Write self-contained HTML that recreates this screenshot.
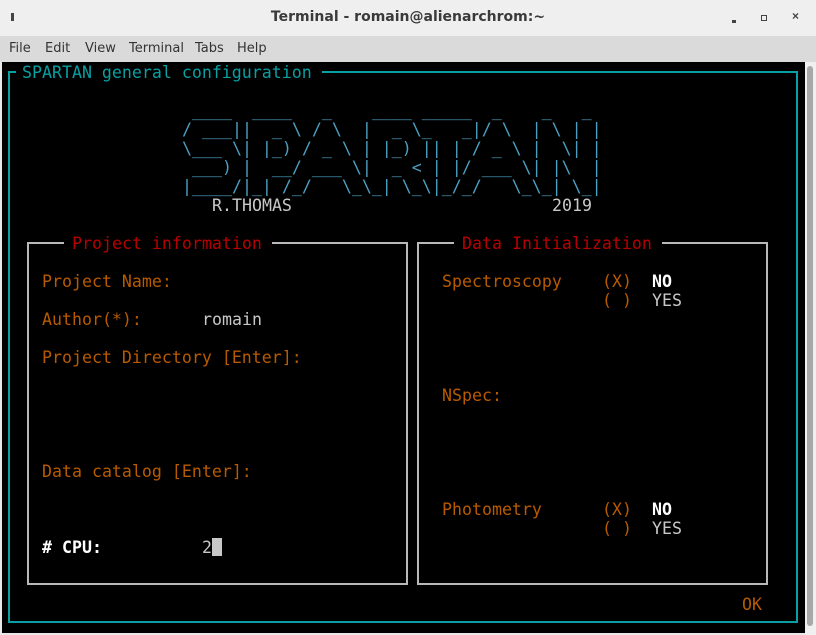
<!DOCTYPE html>
<html><head><meta charset="utf-8"><style>
body{margin:0;width:816px;height:635px;overflow:hidden;background:#e8e8e8;font-family:"DejaVu Sans Mono","Liberation Mono",monospace;}
#tb{position:absolute;left:0;top:0;width:816px;height:36px;background:#efefef;border-bottom:1px solid #d8d8d8;}
#tb .t{position:absolute;left:0;width:816px;top:9px;text-align:center;font:bold 14px "DejaVu Sans","Liberation Sans",sans-serif;color:#3a3a3a;}
#mb{position:absolute;left:0;top:36px;width:816px;height:26px;background:#dadada;font:13px "DejaVu Sans","Liberation Sans",sans-serif;color:#333;}
#mb span{position:absolute;top:5px;}
#term{position:absolute;left:2px;top:62px;width:803px;height:571px;background:#000;}
#sb{position:absolute;left:805px;top:62px;width:11px;height:573px;background:#f0f0f0;}
#sb div{position:absolute;left:2px;top:4px;width:6px;height:560px;background:#a8a8a8;border-radius:3px;}
.s{position:absolute;font-size:16.6px;line-height:19px;white-space:pre;margin-top:1px;}
.o{color:#b85a00}.r{color:#b80000}.c{color:#08a0a2}.g{color:#c8c8c8}.w{color:#fff;font-weight:bold}.a{color:#4c9fc2}
.ln{position:absolute;background:#08a0a2}
.gl{position:absolute;background:#b8b8b8}
</style></head><body>
<div id="tb"><div class="t">Terminal - romain@alienarchrom:~</div>
<div style="position:absolute;left:11px;top:13px;width:3px;height:8px;background:#444"></div>
<div style="position:absolute;left:732px;top:20px;width:4px;height:3px;background:#444"></div>
<div style="position:absolute;left:761px;top:15px;width:4px;height:4px;border:1.5px solid #444"></div>
<div style="position:absolute;left:792px;top:9px;font:bold 12px sans-serif;color:#444">×</div>
</div>
<div id="mb"><span style="left:9px">File</span><span style="left:45px">Edit</span><span style="left:85px">View</span><span style="left:129px">Terminal</span><span style="left:195px">Tabs</span><span style="left:237px">Help</span></div>
<div id="term"></div>
<div id="sb"><div></div></div>

<div class="ln" style="left:8px;top:71px;width:8px;height:2px"></div>
<div class="ln" style="left:322px;top:71px;width:476px;height:2px"></div>
<div class="ln" style="left:8px;top:71px;width:2px;height:552px"></div>
<div class="ln" style="left:796px;top:71px;width:2px;height:552px"></div>
<div class="ln" style="left:8px;top:621px;width:790px;height:2px"></div>
<div class="s c" style="left:22px;top:62px">SPARTAN general configuration</div>

<div class="gl" style="left:27px;top:242px;width:37px;height:2px"></div>
<div class="gl" style="left:272px;top:242px;width:136px;height:2px"></div>
<div class="gl" style="left:27px;top:242px;width:2px;height:343px"></div>
<div class="gl" style="left:406px;top:242px;width:2px;height:343px"></div>
<div class="gl" style="left:27px;top:583px;width:381px;height:2px"></div>
<div class="s r" style="left:72px;top:233px">Project information</div>
<div class="gl" style="left:417px;top:242px;width:37px;height:2px"></div>
<div class="gl" style="left:662px;top:242px;width:106px;height:2px"></div>
<div class="gl" style="left:417px;top:242px;width:2px;height:343px"></div>
<div class="gl" style="left:766px;top:242px;width:2px;height:343px"></div>
<div class="gl" style="left:417px;top:583px;width:351px;height:2px"></div>
<div class="s r" style="left:462px;top:233px">Data Initialization</div>

<div class="s a" style="left:182px;top:100px"> ____  ____   _    ____ _____  _    _   _ 
/ ___||  _ \ / \  |  _ \_   _|/ \  | \ | |
\___ \| |_) / _ \ | |_) || | / _ \ |  \| |
 ___) |  __/ ___ \|  _ &lt; | |/ ___ \| |\  |
|____/|_| /_/   \_\_| \_\|_/_/   \_\_| \_|</div>
<div class="s g" style="left:212px;top:195px">R.THOMAS</div>
<div class="s g" style="left:552px;top:195px">2019</div>

<div class="s o" style="left:42px;top:271px">Project Name:</div>
<div class="s o" style="left:42px;top:309px">Author(*):</div>
<div class="s g" style="left:202px;top:309px">romain</div>
<div class="s o" style="left:42px;top:347px">Project Directory [Enter]:</div>
<div class="s o" style="left:42px;top:461px">Data catalog [Enter]:</div>
<div class="s w" style="left:42px;top:537px"># CPU:</div>
<div class="s g" style="left:202px;top:537px">2</div>
<div style="position:absolute;left:212px;top:538px;width:10px;height:18px;background:#c8c8c8"></div>

<div class="s o" style="left:442px;top:271px">Spectroscopy</div>
<div class="s o" style="left:602px;top:271px">(X)</div>
<div class="s w" style="left:652px;top:271px">NO</div>
<div class="s o" style="left:602px;top:290px">( )</div>
<div class="s g" style="left:652px;top:290px">YES</div>
<div class="s o" style="left:442px;top:385px">NSpec:</div>
<div class="s o" style="left:442px;top:499px">Photometry</div>
<div class="s o" style="left:602px;top:499px">(X)</div>
<div class="s w" style="left:652px;top:499px">NO</div>
<div class="s o" style="left:602px;top:518px">( )</div>
<div class="s g" style="left:652px;top:518px">YES</div>
<div class="s o" style="left:742px;top:594px">OK</div>
</body></html>
